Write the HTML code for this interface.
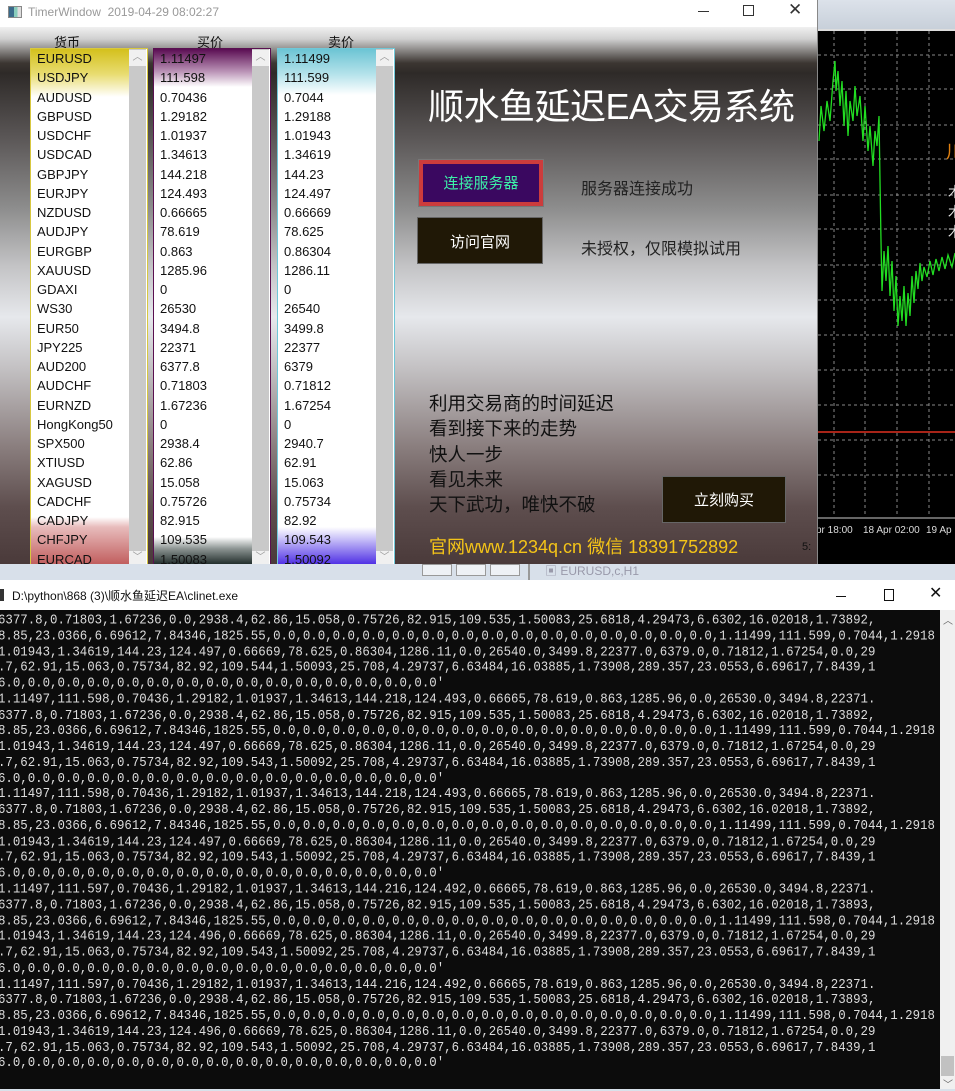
<!DOCTYPE html>
<html><head><meta charset="utf-8"><style>
*{margin:0;padding:0;box-sizing:border-box}
body{width:955px;height:1089px;overflow:hidden;background:#d9e1ea;font-family:"Liberation Sans","Noto Sans CJK SC",sans-serif;position:relative}
.abs{position:absolute}
#win{left:0;top:0;width:818px;height:564px;background:#fff;overflow:hidden;border-right:1px solid #888}
#tb{left:0;top:0;width:818px;height:27px;background:#fff;font-size:12px;color:#999}
#body{left:0;top:27px;width:818px;height:537px;background:linear-gradient(to bottom,#f0f0f0 0px,#d0d0d0 12px,#3c3632 36px,#2e2a28 46px,#5a5656 110px,#8c8c8c 180px,#c4c4c6 240px,#e6e8ec 290px,#c4c2c4 340px,#8a7e7e 420px,#5e4e4e 480px,#4a3a3a 537px)}
.hd{font-size:13px;color:#111;top:32px}
.list{top:48px;width:118px;height:516px;background:#fff;overflow:hidden}
.list .rows{position:absolute;left:0;top:0;width:100px;height:516px}
.list .r{height:19.25px;line-height:19.25px;font-size:13px;color:#111;padding-left:6px;white-space:nowrap}
.sb{position:absolute;right:1px;top:0;width:17px;height:516px;background:#c9c9c9}
.sb .up{position:absolute;top:1px;left:0;width:17px;height:16px;background:#f0f0f0;color:#999;font-size:10px;text-align:center;line-height:16px}
.sb .dn{position:absolute;bottom:0;left:0;width:17px;height:14px;background:#f0f0f0;color:#999;font-size:10px;text-align:center;line-height:14px}
.cn{font-family:"Liberation Sans","Noto Sans CJK SC",sans-serif}
#chart{left:818px;top:0;width:137px;height:564px;background:#000}
#strip{left:0;top:564px;width:955px;height:17px;background:#d8e0ea}
#ctitle{left:0;top:580px;width:955px;height:30px;background:#fff;font-size:12px;color:#111}
#con{left:0;top:610px;width:940px;height:479px;background:#0c0c0c;overflow:hidden}
#con pre{position:absolute;left:-2px;top:3px;font-family:"Liberation Mono",monospace;font-size:12.4px;line-height:13.77px;color:#dcdcdc;white-space:pre;transform:scaleY(1.15);transform-origin:0 0}
#csb{left:940px;top:610px;width:15px;height:479px;background:#f0f0f0}
</style></head><body>
<div id="win" class="abs">
 <div id="tb" class="abs">
  <div class="abs" style="left:8px;top:6px;width:14px;height:12px;border:1px solid #888;background:linear-gradient(90deg,#3a6a8a 0 40%,#8cb 40% 70%,#ddd 70%)"></div>
  <div class="abs" style="left:28px;top:5px">TimerWindow&nbsp;&nbsp;2019-04-29 08:02:27</div>
  <div class="abs" style="left:698px;top:11px;width:11px;height:1px;background:#333"></div>
  <div class="abs" style="left:743px;top:5px;width:11px;height:11px;border:1px solid #333"></div>
  <div class="abs" style="left:788px;top:0px;font-size:17px;color:#333">✕</div>
 </div>
 <div id="body" class="abs"></div>
 <div class="abs hd cn" style="left:54px">货币</div>
 <div class="abs hd cn" style="left:197px">买价</div>
 <div class="abs hd cn" style="left:328px">卖价</div>

 <div class="abs list" style="left:30px;border:1px solid #d8c840;border-bottom:none">
  <div class="rows" style="background:linear-gradient(to bottom,#d4c01c 0px,#e8dc70 25px,#fff 48px,#fff 468px,#e8bcbc 478px,#c05c5c 516px)">
   <div class="r">EURUSD</div><div class="r">USDJPY</div><div class="r">AUDUSD</div><div class="r">GBPUSD</div><div class="r">USDCHF</div><div class="r">USDCAD</div><div class="r">GBPJPY</div><div class="r">EURJPY</div><div class="r">NZDUSD</div><div class="r">AUDJPY</div><div class="r">EURGBP</div><div class="r">XAUUSD</div><div class="r">GDAXI</div><div class="r">WS30</div><div class="r">EUR50</div><div class="r">JPY225</div><div class="r">AUD200</div><div class="r">AUDCHF</div><div class="r">EURNZD</div><div class="r">HongKong50</div><div class="r">SPX500</div><div class="r">XTIUSD</div><div class="r">XAGUSD</div><div class="r">CADCHF</div><div class="r">CADJPY</div><div class="r">CHFJPY</div><div class="r">EURCAD</div>
  </div>
  <div class="sb"><div class="up">︿</div><div class="dn">﹀</div></div>
 </div>
 <div class="abs list" style="left:153px;border:1px solid #5a1050;border-bottom:none">
  <div class="rows" style="background:linear-gradient(to bottom,#5a0c52 0px,#b890b4 22px,#fff 38px,#fff 488px,#8a9290 500px,#1c2826 516px)">
   <div class="r">1.11497</div><div class="r">111.598</div><div class="r">0.70436</div><div class="r">1.29182</div><div class="r">1.01937</div><div class="r">1.34613</div><div class="r">144.218</div><div class="r">124.493</div><div class="r">0.66665</div><div class="r">78.619</div><div class="r">0.863</div><div class="r">1285.96</div><div class="r">0</div><div class="r">26530</div><div class="r">3494.8</div><div class="r">22371</div><div class="r">6377.8</div><div class="r">0.71803</div><div class="r">1.67236</div><div class="r">0</div><div class="r">2938.4</div><div class="r">62.86</div><div class="r">15.058</div><div class="r">0.75726</div><div class="r">82.915</div><div class="r">109.535</div><div class="r">1.50083</div>
  </div>
  <div class="sb"><div class="up">︿</div><div class="dn">﹀</div></div>
 </div>
 <div class="abs list" style="left:277px;border:1px solid #70c8d8;border-bottom:none">
  <div class="rows" style="background:linear-gradient(to bottom,#6cc4d4 0px,#b4e2ea 25px,#fff 46px,#fff 478px,#c8c0f8 490px,#4c2ce4 516px)">
   <div class="r">1.11499</div><div class="r">111.599</div><div class="r">0.7044</div><div class="r">1.29188</div><div class="r">1.01943</div><div class="r">1.34619</div><div class="r">144.23</div><div class="r">124.497</div><div class="r">0.66669</div><div class="r">78.625</div><div class="r">0.86304</div><div class="r">1286.11</div><div class="r">0</div><div class="r">26540</div><div class="r">3499.8</div><div class="r">22377</div><div class="r">6379</div><div class="r">0.71812</div><div class="r">1.67254</div><div class="r">0</div><div class="r">2940.7</div><div class="r">62.91</div><div class="r">15.063</div><div class="r">0.75734</div><div class="r">82.92</div><div class="r">109.543</div><div class="r">1.50092</div>
  </div>
  <div class="sb"><div class="up">︿</div><div class="dn">﹀</div></div>
 </div>

 <div class="abs cn" style="left:428px;top:78px;font-size:36px;color:#fff;white-space:nowrap;letter-spacing:-0.5px">顺水鱼延迟EA交易系统</div>
 <div class="abs" style="left:419px;top:160px;width:124px;height:46px;background:#3a0860;border:4px solid #cc3c3c;outline:1px solid #777"></div>
 <div class="abs cn" style="left:419px;top:172px;width:124px;text-align:center;font-size:15px;color:#3cf0a8">连接服务器</div>
 <div class="abs cn" style="left:581px;top:175px;font-size:16px;color:#222">服务器连接成功</div>
 <div class="abs" style="left:417px;top:217px;width:126px;height:47px;background:#201806;border:1px solid #666"></div>
 <div class="abs cn" style="left:417px;top:231px;width:126px;text-align:center;font-size:15px;color:#fff">访问官网</div>
 <div class="abs cn" style="left:581px;top:235px;font-size:16px;color:#222">未授权，仅限模拟试用</div>
 <div class="abs cn" style="left:429px;top:391px;font-size:18.5px;line-height:25.3px;color:#111">利用交易商的时间延迟<br>看到接下来的走势<br>快人一步<br>看见未来<br>天下武功，唯快不破</div>
 <div class="abs" style="left:662px;top:476px;width:124px;height:47px;background:#201806;border:1px solid #666"></div>
 <div class="abs cn" style="left:662px;top:489px;width:124px;text-align:center;font-size:15px;color:#fff">立刻购买</div>
 <div class="abs cn" style="left:429px;top:533px;font-size:18px;color:#f4c418;white-space:nowrap">官网www.1234q.cn 微信 18391752892</div>
 <div class="abs" style="left:802px;top:541px;font-size:11px;color:#111">5:</div>
</div>

<div id="chart" class="abs">
 <div class="abs" style="left:0;top:0;width:137px;height:29px;background:linear-gradient(#dce2ea,#c8d0da)"></div>
 <div class="abs" style="left:0;top:29px;width:137px;height:2px;background:#ddd"></div>
 <svg class="abs" style="left:0;top:31px" width="137" height="533">
  <g stroke="#888" stroke-dasharray="3,3" stroke-width="1">
   <line x1="16" y1="0" x2="16" y2="485"/><line x1="47" y1="0" x2="47" y2="485"/><line x1="79" y1="0" x2="79" y2="485"/><line x1="111" y1="0" x2="111" y2="485"/>
   <line x1="0" y1="24" x2="137" y2="24"/><line x1="0" y1="58" x2="137" y2="58"/><line x1="0" y1="94" x2="137" y2="94"/><line x1="0" y1="128" x2="137" y2="128"/><line x1="0" y1="164" x2="137" y2="164"/><line x1="0" y1="198" x2="137" y2="198"/><line x1="0" y1="234" x2="137" y2="234"/><line x1="0" y1="269" x2="137" y2="269"/><line x1="0" y1="304" x2="137" y2="304"/><line x1="0" y1="339" x2="137" y2="339"/><line x1="0" y1="374" x2="137" y2="374"/><line x1="0" y1="409" x2="137" y2="409"/><line x1="0" y1="444" x2="137" y2="444"/>
  </g>
  <line x1="0" y1="401" x2="137" y2="401" stroke="#e03020" stroke-width="1.5"/>
  <line x1="0" y1="487" x2="137" y2="487" stroke="#ccc" stroke-width="1"/>
  <polyline fill="none" stroke="#22dd22" stroke-width="1.3" points="1,110 3,75 6,100 9,70 12,90 15,50 17,30 18,60 20,40 22,75 24,50 26,95 28,60 30,105 32,70 35,90 37,55 39,85 42,65 45,110 47,75 50,120 52,95 55,135 57,100 59,115 61,85 62,150 63,210 64,260 66,220 68,250 70,215 72,265 74,230 76,280 78,245 80,295 82,265 84,290 86,255 88,295 90,262 92,285 94,245 96,272 98,240 100,258 102,232 104,250 106,236 109,246 112,230 115,244 118,228 121,240 124,226 127,238 130,224 134,236 137,222"/>
  <text x="-2" y="502" fill="#ddd" font-size="10" font-family="Liberation Sans">pr 18:00</text>
  <text x="45" y="502" fill="#ddd" font-size="10" font-family="Liberation Sans">18 Apr 02:00</text>
  <text x="108" y="502" fill="#ddd" font-size="10" font-family="Liberation Sans">19 Ap</text>
 </svg>
 <div class="abs cn" style="left:128px;top:138px;font-size:18px;color:#e08010">川</div>
 <div class="abs cn" style="left:130px;top:182px;font-size:14px;line-height:20px;color:#eee">木<br>木<br>木</div>
</div>

<div id="strip" class="abs">
 <div class="abs" style="left:422px;top:0;width:30px;height:12px;border:1px solid #999;background:#eef1f5"></div>
 <div class="abs" style="left:456px;top:0;width:30px;height:12px;border:1px solid #999;background:#eef1f5"></div>
 <div class="abs" style="left:490px;top:0;width:30px;height:12px;border:1px solid #999;background:#eef1f5"></div>
 <div class="abs" style="left:528px;top:0;width:2px;height:17px;background:#999"></div>
 <div class="abs" style="left:545px;top:-2px;font-size:12px;color:#99a">▣ EURUSD,c,H1</div>
</div>

<div id="ctitle" class="abs">
 <div class="abs" style="left:0;top:9px;width:4px;height:12px;background:#333"></div>
 <div class="abs cn" style="left:12px;top:7px;font-size:12px">D:\python\868 (3)\顺水鱼延迟EA\clinet.exe</div>
 <div class="abs" style="left:836px;top:16px;width:10px;height:1px;background:#111"></div>
 <div class="abs" style="left:884px;top:9px;width:10px;height:12px;border:1px solid #111"></div>
 <div class="abs" style="left:929px;top:3px;font-size:16px;color:#111">✕</div>
</div>

<div id="con" class="abs"><pre>6377.8,0.71803,1.67236,0.0,2938.4,62.86,15.058,0.75726,82.915,109.535,1.50083,25.6818,4.29473,6.6302,16.02018,1.73892,
8.85,23.0366,6.69612,7.84346,1825.55,0.0,0.0,0.0,0.0,0.0,0.0,0.0,0.0,0.0,0.0,0.0,0.0,0.0,0.0,0.0,1.11499,111.599,0.7044,1.2918
1.01943,1.34619,144.23,124.497,0.66669,78.625,0.86304,1286.11,0.0,26540.0,3499.8,22377.0,6379.0,0.71812,1.67254,0.0,29
.7,62.91,15.063,0.75734,82.92,109.544,1.50093,25.708,4.29737,6.63484,16.03885,1.73908,289.357,23.0553,6.69617,7.8439,1
6.0,0.0,0.0,0.0,0.0,0.0,0.0,0.0,0.0,0.0,0.0,0.0,0.0,0.0,0.0'
1.11497,111.598,0.70436,1.29182,1.01937,1.34613,144.218,124.493,0.66665,78.619,0.863,1285.96,0.0,26530.0,3494.8,22371.
6377.8,0.71803,1.67236,0.0,2938.4,62.86,15.058,0.75726,82.915,109.535,1.50083,25.6818,4.29473,6.6302,16.02018,1.73892,
8.85,23.0366,6.69612,7.84346,1825.55,0.0,0.0,0.0,0.0,0.0,0.0,0.0,0.0,0.0,0.0,0.0,0.0,0.0,0.0,0.0,1.11499,111.599,0.7044,1.2918
1.01943,1.34619,144.23,124.497,0.66669,78.625,0.86304,1286.11,0.0,26540.0,3499.8,22377.0,6379.0,0.71812,1.67254,0.0,29
.7,62.91,15.063,0.75734,82.92,109.543,1.50092,25.708,4.29737,6.63484,16.03885,1.73908,289.357,23.0553,6.69617,7.8439,1
6.0,0.0,0.0,0.0,0.0,0.0,0.0,0.0,0.0,0.0,0.0,0.0,0.0,0.0,0.0'
1.11497,111.598,0.70436,1.29182,1.01937,1.34613,144.218,124.493,0.66665,78.619,0.863,1285.96,0.0,26530.0,3494.8,22371.
6377.8,0.71803,1.67236,0.0,2938.4,62.86,15.058,0.75726,82.915,109.535,1.50083,25.6818,4.29473,6.6302,16.02018,1.73892,
8.85,23.0366,6.69612,7.84346,1825.55,0.0,0.0,0.0,0.0,0.0,0.0,0.0,0.0,0.0,0.0,0.0,0.0,0.0,0.0,0.0,1.11499,111.599,0.7044,1.2918
1.01943,1.34619,144.23,124.497,0.66669,78.625,0.86304,1286.11,0.0,26540.0,3499.8,22377.0,6379.0,0.71812,1.67254,0.0,29
.7,62.91,15.063,0.75734,82.92,109.543,1.50092,25.708,4.29737,6.63484,16.03885,1.73908,289.357,23.0553,6.69617,7.8439,1
6.0,0.0,0.0,0.0,0.0,0.0,0.0,0.0,0.0,0.0,0.0,0.0,0.0,0.0,0.0'
1.11497,111.597,0.70436,1.29182,1.01937,1.34613,144.216,124.492,0.66665,78.619,0.863,1285.96,0.0,26530.0,3494.8,22371.
6377.8,0.71803,1.67236,0.0,2938.4,62.86,15.058,0.75726,82.915,109.535,1.50083,25.6818,4.29473,6.6302,16.02018,1.73893,
8.85,23.0366,6.69612,7.84346,1825.55,0.0,0.0,0.0,0.0,0.0,0.0,0.0,0.0,0.0,0.0,0.0,0.0,0.0,0.0,0.0,1.11499,111.598,0.7044,1.2918
1.01943,1.34619,144.23,124.496,0.66669,78.625,0.86304,1286.11,0.0,26540.0,3499.8,22377.0,6379.0,0.71812,1.67254,0.0,29
.7,62.91,15.063,0.75734,82.92,109.543,1.50092,25.708,4.29737,6.63484,16.03885,1.73908,289.357,23.0553,6.69617,7.8439,1
6.0,0.0,0.0,0.0,0.0,0.0,0.0,0.0,0.0,0.0,0.0,0.0,0.0,0.0,0.0'
1.11497,111.597,0.70436,1.29182,1.01937,1.34613,144.216,124.492,0.66665,78.619,0.863,1285.96,0.0,26530.0,3494.8,22371.
6377.8,0.71803,1.67236,0.0,2938.4,62.86,15.058,0.75726,82.915,109.535,1.50083,25.6818,4.29473,6.6302,16.02018,1.73893,
8.85,23.0366,6.69612,7.84346,1825.55,0.0,0.0,0.0,0.0,0.0,0.0,0.0,0.0,0.0,0.0,0.0,0.0,0.0,0.0,0.0,1.11499,111.598,0.7044,1.2918
1.01943,1.34619,144.23,124.496,0.66669,78.625,0.86304,1286.11,0.0,26540.0,3499.8,22377.0,6379.0,0.71812,1.67254,0.0,29
.7,62.91,15.063,0.75734,82.92,109.543,1.50092,25.708,4.29737,6.63484,16.03885,1.73908,289.357,23.0553,6.69617,7.8439,1
6.0,0.0,0.0,0.0,0.0,0.0,0.0,0.0,0.0,0.0,0.0,0.0,0.0,0.0,0.0'</pre></div>
<div id="csb" class="abs">
 <div class="abs" style="left:3px;top:2px;font-size:10px;color:#666">︿</div>
 <div class="abs" style="left:1px;top:446px;width:13px;height:20px;background:#c1c1c1"></div>
 <div class="abs" style="left:3px;top:466px;font-size:10px;color:#666">﹀</div>
</div>
</body></html>
